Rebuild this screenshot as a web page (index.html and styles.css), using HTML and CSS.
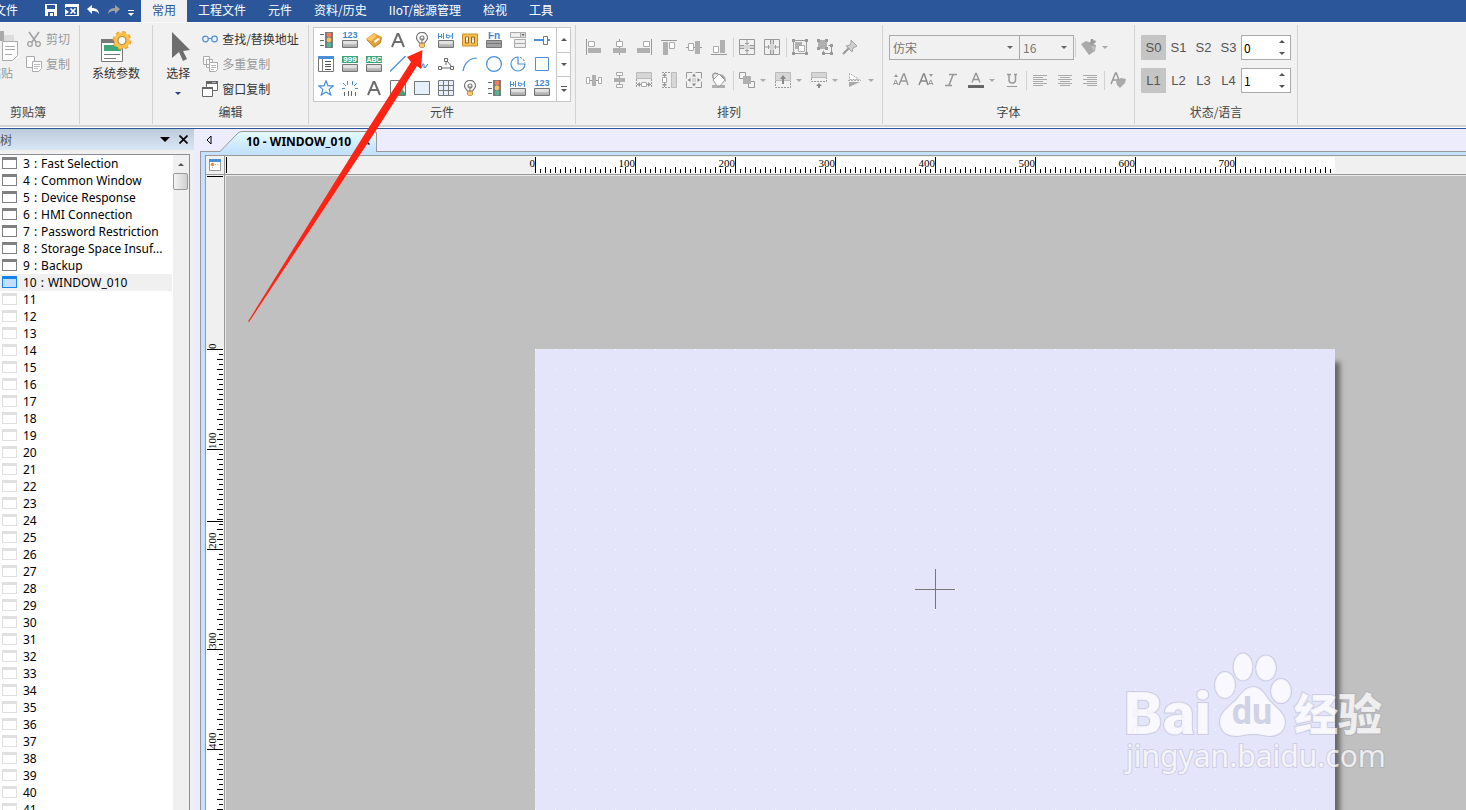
FILE: index.html
```html
<!DOCTYPE html>
<html lang="zh-CN">
<head>
<meta charset="utf-8">
<title>10 - WINDOW_010</title>
<link rel="stylesheet" href="styles.css">
</head>
<body>
<svg class="defs" width="0" height="0" aria-hidden="true">
  <defs>
    <linearGradient id="metal" x1="0" y1="0" x2="0" y2="1"><stop offset="0" stop-color="#e4e4e4"/><stop offset="1" stop-color="#a6a6a6"/></linearGradient>
    <symbol id="i-traffic" viewBox="0 0 16 16"><path d="M2 2.5h4M2 8.5h4M2 13.5h4" stroke="#666"/><rect x="7" y="0" width="8" height="16" fill="#7a7a7a"/><circle cx="11" cy="3" r="2.4" fill="#f47a5c"/><circle cx="11" cy="8" r="2.4" fill="#fbc15e"/><circle cx="11" cy="13" r="2.4" fill="#4cba96"/></symbol>
    <symbol id="i-key" viewBox="0 0 16 16"><path d="M.5 8.5h15v7H.5z" fill="url(#metal)" stroke="#777"/><path d="M2 9h12v3H2z" fill="#e2e2e2"/></symbol>
    <symbol id="i-123" viewBox="0 0 16 16"><text x="8" y="6" class="g-blue">123</text><use href="#i-key" width="16" height="16"/></symbol>
    <symbol id="i-999" viewBox="0 0 16 16"><path d="M0 0h16v7H0z" fill="#3fa679"/><text x="8" y="6" class="g-white">999</text><use href="#i-key" width="16" height="16"/></symbol>
    <symbol id="i-abc" viewBox="0 0 16 16"><path d="M0 0h16v7H0z" fill="#3fa679"/><text x="8" y="6" class="g-white g-abc">ABC</text><use href="#i-key" width="16" height="16"/></symbol>
    <symbol id="i-meter" viewBox="0 0 16 16"><path d="M.5 1v6M3.500 2v4M.5 4.500h4M5.500 1v6M8.500 2v4M10.500 4h4M14.500 1v6" stroke="#4a90d9" fill="none"/><circle cx="10" cy="4.500" r="1.500" stroke="#4a90d9" fill="#fff"/><use href="#i-key" width="16" height="16"/></symbol>
    <symbol id="i-tag" viewBox="0 0 16 16"><path d="M0 7l8-6 8 4-1 6-7 5z" fill="#e2a13d"/><path d="M1 7l7-5 3 2-6 5z" fill="#fbc860"/><path d="M8 9l4-3 2 1-5 4z" fill="#fff"/><path d="M1 8l7 7M15 6l-1 5-6 4" stroke="#c98a30" fill="none"/></symbol>
    <symbol id="i-a" viewBox="0 0 16 16"><path d="M2 15L7.500 2h1L14 15M4.500 10h7" stroke="#6e6e6e" stroke-width="2" fill="none"/></symbol>
    <symbol id="i-bulb" viewBox="0 0 16 16"><path d="M5.500 11C4.500 9 2.500 8.500 2.500 5.800a5.500 5.500 0 0 1 11 0c0 2.700-2 3.200-3 5.200z" fill="#fff" stroke="#777" stroke-width="1.200"/><circle cx="8" cy="6" r="2" fill="none" stroke="#777" stroke-width="1.200"/><path d="M8 6v5" stroke="#777"/><path d="M5.500 11.500h5v3l-1 1h-3l-1-1z" fill="#f8c96a" stroke="#c49a50"/></symbol>
    <symbol id="i-switch" viewBox="0 0 16 16"><path d="M.5 2h15v12H.5z" fill="#fcc04c" stroke="#c98f2e"/><path d="M3.500 5h3v6h-3zM9.500 5h3v6h-3z" fill="#ddd" stroke="#946b22"/><path d="M4 5.500h2v2H4zM10 8.500h2v2h-2z" fill="#fff"/></symbol>
    <symbol id="i-fn" viewBox="0 0 16 16"><text x="8" y="7" class="g-blue g-fn">Fn</text><path d="M.5 8.500h15v7H.5z" fill="#a3a3a3" stroke="#777"/><path d="M1 11.500h14" stroke="#777"/></symbol>
    <symbol id="i-combo" viewBox="0 0 16 16"><path d="M.5.5h15v5H.5zM4.500 7.500h11v4h-11zM4.500 11.500h11v4h-11z" fill="#eee" stroke="#aaa"/><path d="M10.500.5h5v5h-5z" fill="#ddd" stroke="#aaa"/><path d="M11.500 2h3L13 4z" fill="#555"/></symbol>
    <symbol id="i-slider" viewBox="0 0 16 16"><path d="M0 8h9M14 8h2" stroke="#4a90d9" stroke-width="2"/><path d="M9.500 4.500h4v8h-4z" fill="#fff" stroke="#777"/></symbol>
    <symbol id="i-list" viewBox="0 0 16 16"><path d="M.5.5h15v15H.5z" fill="#fff" stroke="#777"/><path d="M0 0h16v3H0z" fill="#4a90d9"/><path d="M4.500 3v12" stroke="#777"/><path d="M7 5.500h6M7 8.500h6M7 10.500h6M7 13.500h6" stroke="#555"/></symbol>
    <symbol id="i-line" viewBox="0 0 16 16"><path d="M0 15.500L15.500 0" stroke="#4a90d9" stroke-width="1.300"/></symbol>
    <symbol id="i-free" viewBox="0 0 16 16"><path d="M1 11c2-8 3-7 4-3s2 5 3 2 2-3 2 0 2 1 4-2" stroke="#4a90d9" fill="none" stroke-width="1.200"/></symbol>
    <symbol id="i-node" viewBox="0 0 16 16"><path d="M8 4v5M9 5l5 6M3 12h9" stroke="#666" fill="none"/><path d="M6.500 2.500h3v3h-3zM.5 10.500h3v3h-3zM12.500 10.500h3v3h-3z" fill="#fff" stroke="#666"/></symbol>
    <symbol id="i-arc" viewBox="0 0 16 16"><path d="M1 15C2 8 7 2 15 2" stroke="#4a90d9" fill="none" stroke-width="1.200"/></symbol>
    <symbol id="i-circle" viewBox="0 0 16 16"><circle cx="8" cy="8" r="7.400" stroke="#4a90d9" fill="#fff" stroke-width="1.200"/></symbol>
    <symbol id="i-pie" viewBox="0 0 16 16"><path d="M8 1a7 7 0 1 0 7 7H8z" stroke="#4a90d9" fill="#fff" stroke-width="1.200"/><path d="M10 1.500A7 7 0 0 1 15 7" stroke="#666" fill="none" stroke-dasharray="2 1.500"/></symbol>
    <symbol id="i-rect" viewBox="0 0 16 16"><path d="M1.500 1.500h13v13h-13z" stroke="#4a90d9" fill="#fff"/></symbol>
    <symbol id="i-star" viewBox="0 0 16 16"><path d="M8 .8l2 5h5.300l-4.100 3.600 1.500 5.600L8 11.900 3.300 15l1.500-5.600L.7 5.800H6z" stroke="#4a90d9" fill="#fff" stroke-width="1.200"/></symbol>
    <symbol id="i-burst" viewBox="0 0 16 16"><path d="M5.500 1v4M10.500 1v4M1 3l3 3M15 3l-3 3M0 8.500h3M13 8.500h3" stroke="#4a90d9" fill="none"/><path d="M2.500 12v4M6.500 11v5M9.500 11v5M13.500 12v4" stroke="#666"/></symbol>
    <symbol id="i-pic" viewBox="0 0 16 16"><path d="M.5.500h15v15H.5z" fill="#fff" stroke="#777"/><path d="M1 15l4-5 3 2 3-5 4 6v2z" fill="#3fa679"/></symbol>
    <symbol id="i-fill" viewBox="0 0 16 16"><path d="M.5 1.500h15v13H.5z" fill="#e4f1fd" stroke="#777"/></symbol>
    <symbol id="i-grid" viewBox="0 0 16 16"><path d="M.5.500h15v15H.5z" fill="#e4f1fd"/><path d="M.5.500h15v15H.5zM5.500 0v16M10.500 0v16M0 5.500h16M0 10.500h16" fill="none" stroke="#777"/></symbol>

    <symbol id="r-left" viewBox="0 0 16 16"><path d="M.5 0v16" stroke="#999"/><path d="M2.500 2.500h6v5h-6z" fill="#fff" stroke="#aaa"/><path d="M2 9h13v5H2z" fill="#b0b0b0"/></symbol>
    <symbol id="r-center" viewBox="0 0 16 16"><path d="M8.500 0v16" stroke="#999"/><path d="M5.500 2.500h6v5h-6z" fill="#fff" stroke="#aaa"/><path d="M2 9h13v5H2z" fill="#b0b0b0"/></symbol>
    <symbol id="r-right" viewBox="0 0 16 16"><path d="M15.500 0v16" stroke="#999"/><path d="M7.500 2.500h6v5h-6z" fill="#fff" stroke="#aaa"/><path d="M1 9h13v5H1z" fill="#b0b0b0"/></symbol>
    <symbol id="r-top" viewBox="0 0 16 16"><path d="M0 1.500h16" stroke="#999"/><path d="M2 3h5v13H2z" fill="#b0b0b0"/><path d="M8.500 3.500h5v6h-5z" fill="#fff" stroke="#aaa"/></symbol>
    <symbol id="r-middle" viewBox="0 0 16 16"><path d="M0 8.500h16" stroke="#999"/><path d="M2.500 4.500h5v7h-5z" fill="#fff" stroke="#aaa"/><path d="M9 2h5v13H9z" fill="#b0b0b0"/></symbol>
    <symbol id="r-bottom" viewBox="0 0 16 16"><path d="M0 15.500h16" stroke="#999"/><path d="M2.500 7.500h5v6h-5z" fill="#fff" stroke="#aaa"/><path d="M9 1h5v13H9z" fill="#b0b0b0"/></symbol>
    <symbol id="r-midv" viewBox="0 0 16 16"><path d="M.5.500h15v15H.5z" fill="none" stroke="#999"/><path d="M1 6h14v4H1z" fill="#d6d6d6"/><path d="M0 6.500h5M11 6.500h5M0 9.500h5M11 9.500h5M8 1v5M6 4.500h4M8 10v5M6 11.500h4" stroke="#999"/></symbol>
    <symbol id="r-midh" viewBox="0 0 16 16"><path d="M.5.500h15v15H.5z" fill="none" stroke="#999"/><path d="M6 1h4v14H6z" fill="#d6d6d6"/><path d="M6.500 0v5M6.500 11v5M9.500 0v5M9.500 11v5M1 8h5M4.500 6v4M10 8h5M11.500 6v4" stroke="#999"/></symbol>
    <symbol id="r-group" viewBox="0 0 16 16"><path d="M2 1.500h12M2 14.500h12M1.500 2v12M14.500 2v12" stroke="#999"/><path d="M0 0h3v3H0zM13 0h3v3h-3zM0 13h3v3H0zM13 13h3v3h-3z" fill="#999"/><path d="M3 3h7v7H3z" fill="#b0b0b0"/><path d="M6.500 6.500h6v6h-6z" fill="#fff" stroke="#aaa"/></symbol>
    <symbol id="r-ungroup" viewBox="0 0 16 16"><path d="M11.500 6.500h3v8h-8v-3" fill="none" stroke="#999"/><path d="M1 1h9v9H1z" fill="#b0b0b0"/><path d="M0 0h3v3H0zM8 0h3v3H8zM0 8h3v3H0zM8 8h3v3H8zM13 5h3v3h-3zM13 13h3v3h-3zM5 13h3v3H5z" fill="#999"/></symbol>
    <symbol id="r-pin" viewBox="0 0 16 16"><path d="M9 1l6 6-2 1-2 1-1 4-6-6 4-1 1-2z" fill="#d0d0d0" stroke="#a4a4a4"/><path d="M7 9l-6 6" stroke="#999" stroke-width="2"/></symbol>
    <symbol id="r-spaceh" viewBox="0 0 16 16"><path d="M0 8.500h16" stroke="#999"/><path d="M.5 5.500h3v6h-3zM12.500 5.500h3v6h-3z" fill="#fff" stroke="#aaa"/><path d="M6 3h4v11H6z" fill="#b0b0b0"/></symbol>
    <symbol id="r-spacev" viewBox="0 0 16 16"><path d="M8.500 0v16" stroke="#999"/><path d="M5.500.500h6v3h-6zM5.500 12.500h6v3h-6z" fill="#fff" stroke="#aaa"/><path d="M3 6h11v4H3z" fill="#b0b0b0"/></symbol>
    <symbol id="r-samew" viewBox="0 0 16 16"><path d="M.5.500h15v6H.5z" fill="#d6d6d6" stroke="#bbb"/><path d="M.5 7v8M15.500 7v8" stroke="#999" stroke-dasharray="2 1"/><path d="M1 12.500h14" stroke="#999"/><path d="M4 10v5l-3-2.500zM12 10v5l3-2.500z" fill="#999"/><path d="M5.500 10.500h5v4h-5z" fill="#fff" stroke="#aaa"/></symbol>
    <symbol id="r-sameh" viewBox="0 0 16 16"><path d="M10.500.5h5v15h-5z" fill="#d6d6d6" stroke="#bbb"/><path d="M1 .5h8M1 15.500h8" stroke="#999" stroke-dasharray="2 1"/><path d="M3.500 1v14" stroke="#999"/><path d="M1 4h5L3.500 1zM1 12h5l-2.500 3z" fill="#999"/><path d="M1.500 5.500h4v5h-4z" fill="#fff" stroke="#aaa"/></symbol>
    <symbol id="r-same" viewBox="0 0 16 16"><path d="M.5.500h15v15H.5z" fill="none" stroke="#999" stroke-dasharray="6 3 12 3 12 3 12 3 6"/><path d="M6 6h4v4H6z" fill="#d6d6d6"/><path d="M8 1.500l2 3H6zM8 14.500l2-3H6zM1.500 8l3-2v4zM14.500 8l-3-2v4z" fill="#888"/></symbol>
    <symbol id="r-paint" viewBox="0 0 16 16"><path d="M1 13h13v3H1z" fill="#b0b0b0"/><path d="M8 2c5 0 7 3 7 8l-3-3" fill="#aaa"/><path d="M2 8l6-6 6 6-5 6H6z" fill="#fff" stroke="#999"/><path d="M3 7C0 3 3 0 7 2" fill="none" stroke="#999" stroke-width="1.400"/></symbol>
    <symbol id="r-order" viewBox="0 0 16 16"><path d="M.5.500h6v6h-6zM9.500 9.500h6v6h-6z" fill="#f4f4f4" stroke="#999"/><path d="M4 4h8v8H4z" fill="#b0b0b0"/></symbol>
    <symbol id="r-up" viewBox="0 0 16 16"><path d="M.5.500h15v8H.5z" fill="#d6d6d6" stroke="#bbb"/><path d="M.5 9v6.500h15V9" fill="none" stroke="#999" stroke-dasharray="2 1"/><path d="M8 12V5" stroke="#888" stroke-width="2"/><path d="M5 7h6L8 3z" fill="#888"/></symbol>
    <symbol id="r-down" viewBox="0 0 16 16"><path d="M.5.500h15v5H.5z" fill="#d6d6d6" stroke="#bbb"/><path d="M.5 6v3.500h15V6" fill="none" stroke="#999" stroke-dasharray="2 1"/><path d="M8 16v-4" stroke="#888" stroke-width="2"/><path d="M5 14h6l-3-3z" fill="#888"/></symbol>
    <symbol id="r-flip" viewBox="0 0 16 16"><path d="M2.500 1.500v6h10z" fill="#fff" stroke="#aaa" stroke-dasharray="2 1"/><path d="M1 8.500h13" stroke="#aaa" stroke-dasharray="2 1"/><path d="M2 10h11L2 15z" fill="#a8a8a8"/></symbol>
    <symbol id="r-brush" viewBox="0 0 16 16"><path d="M0 5l5-3 10 4-1 6-6 4z" fill="#aaa"/><path d="M6 2l3 2 1-4h2l1 2 1-1 1 2-4 3" fill="#999"/><path d="M10 7l4 1-1 4z" fill="#c4c4c4"/></symbol>

    <symbol id="f-grow" viewBox="0 0 16 16"><path d="M6 13L10.500 2h.8L15 13M7.500 9h6" stroke="#999" stroke-width="1.500" fill="none"/><path d="M.5 13L2.500 8h.4L5 13M1 11.500h3" stroke="#999" fill="none"/><path d="M1 5h4L3 2z" fill="#999"/></symbol>
    <symbol id="f-shrink" viewBox="0 0 16 16"><path d="M1 13L5.500 2h.8L10 13M2.500 9h6" stroke="#888" stroke-width="1.500" fill="none"/><path d="M10.500 13l2-5h.4l2.100 5M11 11.500h3" stroke="#999" fill="none"/><path d="M11 2h4l-2 3z" fill="#999"/></symbol>
    <symbol id="f-italic" viewBox="0 0 16 16"><path d="M6 2.500h8M2 13.500h7M10 3L6 13" stroke="#999" stroke-width="1.600"/></symbol>
    <symbol id="f-color" viewBox="0 0 16 16"><path d="M4 10.500L7.700 1.500h.6L12 10.500M5.500 7.500h5" stroke="#999" stroke-width="1.500" fill="none"/><path d="M0 13h16v3H0z" fill="#666"/></symbol>
    <symbol id="f-under" viewBox="0 0 16 16"><path d="M3 2.500h4M10 2.500h3M5 3v5c0 4 6.500 4 6.500 0V3" stroke="#999" stroke-width="1.500" fill="none"/><path d="M3 14.500h10" stroke="#999"/></symbol>
    <symbol id="f-al" viewBox="0 0 16 16"><path d="M1 3.500h14M1 5.500h10M1 7.500h14M1 9.500h10M1 11.500h14M1 13.500h10" stroke="#aaa"/></symbol>
    <symbol id="f-ac" viewBox="0 0 16 16"><path d="M1 3.500h14M3 5.500h10M1 7.500h14M3 9.500h10M1 11.500h14M3 13.500h10" stroke="#aaa"/></symbol>
    <symbol id="f-ar" viewBox="0 0 16 16"><path d="M1 3.500h14M5 5.500h10M1 7.500h14M5 9.500h10M1 11.500h14M5 13.500h10" stroke="#aaa"/></symbol>
    <symbol id="f-clear" viewBox="0 0 16 16"><path d="M1 12L5.500 1h.8L10.500 12M3 8h6" stroke="#999" stroke-width="1.500" fill="none"/><path d="M6 9l5-3 5 1-1 4-5 5-3-3z" fill="#aaa"/></symbol>

    <symbol id="e-cut" viewBox="0 0 16 16"><path d="M3 1l7 10M13 1L6 11" stroke="#a0a0a0" stroke-width="1.600"/><circle cx="4" cy="13" r="2.300" fill="none" stroke="#a0a0a0" stroke-width="1.300"/><circle cx="12" cy="13" r="2.300" fill="none" stroke="#a0a0a0" stroke-width="1.300"/></symbol>
    <symbol id="e-copy" viewBox="0 0 16 16"><path d="M.5.500h8v11h-8z" fill="#fff" stroke="#aaa"/><path d="M6.500 5.500h9v7l-3 3h-6z" fill="#fff" stroke="#aaa"/><path d="M8 8.500h6M8 10.500h6M8 12.500h4" stroke="#bbb"/></symbol>
    <symbol id="e-find" viewBox="0 0 16 16"><circle cx="3.500" cy="8" r="2.800" fill="none" stroke="#4a90d9" stroke-width="1.200"/><circle cx="12.500" cy="8" r="2.800" fill="none" stroke="#4a90d9" stroke-width="1.200"/><path d="M6 7.500h4" stroke="#4a90d9"/></symbol>
    <symbol id="e-multi" viewBox="0 0 16 16"><path d="M1.500.500h6v8h-6zM4.500 3.500h6v8h-6z" fill="#fff" stroke="#aaa"/><path d="M7.500 6.500h8v7l-2 2h-6z" fill="#fff" stroke="#aaa"/><path d="M9 9.500h5M9 11.500h5M9 13.500h3" stroke="#bbb"/></symbol>
    <symbol id="e-win" viewBox="0 0 16 16"><path d="M4.500.500h11v9h-11z" fill="#fff" stroke="#666"/><path d="M4 0h12v3H4z" fill="#666"/><path d="M10.500 1.500h1M12.500 1.500h1" stroke="#fff"/><path d="M.5 6.500h10v9H.5z" fill="#fff" stroke="#666"/><path d="M0 6h11v2H0z" fill="#666"/></symbol>
  </defs>
</svg>

<div class="app">
  <nav class="menubar" aria-label="主菜单">
    <a class="tab file" href="#file">文件</a>
    <div class="quick">
      <button aria-label="保存"><svg width="14" height="14" viewBox="0 0 14 14"><path d="M1 1h12v12H1z" fill="#fff"/><path d="M3 2h8v4H3zM4 9h6v4H4z" fill="#2b579a"/><path d="M6 10h3v3H6z" fill="#fff"/></svg></button>
      <button aria-label="编译"><svg width="14" height="14" viewBox="0 0 14 14"><path d="M0 1h14v3H0zM0 12h14v1H0zM12 1h2v12h-2zM0 4h1v1H0z" fill="#fff"/><path d="M5.500 5.500l5 5m0-5l-5 5" stroke="#fff" stroke-width="1.600"/><path d="M0 6l4 3-4 3z" fill="#fff"/></svg></button>
      <button aria-label="撤销"><svg width="14" height="14" viewBox="0 0 14 14"><path d="M1 6l5-4v3c4 0 7 2 7 6-2-3-4-3-7-3v3z" fill="#fff"/></svg></button>
      <button aria-label="重做"><svg width="14" height="14" viewBox="0 0 14 14"><path d="M13 6L8 2v3c-4 0-7 2-7 6 2-3 4-3 7-3v3z" fill="#a0a0a0"/></svg></button>
      <button class="more" aria-label="更多"><svg width="6" height="14" viewBox="0 0 6 14"><path d="M0 7.500h6" stroke="#fff"/><path d="M0 10h6l-3 3z" fill="#fff"/></svg></button>
    </div>
    <a class="tab active" href="#home">常用</a>
    <a class="tab" href="#project">工程文件</a>
    <a class="tab" href="#objects">元件</a>
    <a class="tab" href="#data">资料/历史</a>
    <a class="tab" href="#iiot">IIoT/能源管理</a>
    <a class="tab" href="#view">检视</a>
    <a class="tab" href="#tools">工具</a>
  </nav>

  <div class="ribbon">
    <section class="group clip">
      <div class="body">
        <button class="big dim"><svg width="34" height="32" viewBox="0 0 34 32"><path d="M2 4h28v6H2z" fill="#aaa"/><path d="M10 0h10v5H10z" fill="#aaa"/><path d="M20 4h10v6H20z" fill="#ddd"/><path d="M18.500 10.500h15v14l-5 5h-10z" fill="#fff" stroke="#aaa"/><path d="M21 15.500h10M21 18.500h10M21 23.500h7" stroke="#aaa"/></svg><span>粘贴</span></button>
        <div class="stack">
          <button class="cmd dim"><svg class="ic"><use href="#e-cut"/></svg>剪切</button>
          <button class="cmd dim"><svg class="ic"><use href="#e-copy"/></svg>复制</button>
        </div>
      </div>
      <h2>剪贴簿</h2>
    </section>
    <section class="group sys">
      <div class="body">
        <button class="big"><svg width="32" height="32" viewBox="0 0 32 32"><path d="M1.500 8.500h21v22h-21z" fill="#fff" stroke="#777"/><path d="M1 8h22v4H1z" fill="#777"/><path d="M4 14h17v6H4z" fill="#3fa679"/><path d="M4 23.500h16M4 27.500h12" stroke="#777"/><circle cx="22" cy="9.500" r="8" fill="none" stroke="#eda834" stroke-width="3" stroke-dasharray="3.500 2.783"/><circle cx="22" cy="9.500" r="8" fill="#fcc04c"/><circle cx="22" cy="9.500" r="4" fill="#fff" stroke="#b58a48" stroke-width="1.200"/></svg><span>系统参数</span></button>
      </div>
    </section>
    <section class="group edit">
      <div class="body">
        <button class="big pick"><svg width="32" height="32" viewBox="0 0 32 32"><path d="M10 1l18 18-7 1 4 8-4 2-4-9-7 6z" fill="#6e6e6e"/></svg><span>选择</span><i class="caret blue"></i></button>
        <div class="stack">
          <button class="cmd"><svg class="ic"><use href="#e-find"/></svg>查找/替换地址</button>
          <button class="cmd dim"><svg class="ic"><use href="#e-multi"/></svg>多重复制</button>
          <button class="cmd"><svg class="ic"><use href="#e-win"/></svg>窗口复制</button>
        </div>
      </div>
      <h2>编辑</h2>
    </section>
    <section class="group objects">
      <div class="gallery">
        <div class="cells" id="gallery"></div>
        <div class="pager">
          <button aria-label="上一行"><i class="caret up"></i></button>
          <button aria-label="下一行"><i class="caret"></i></button>
          <button aria-label="展开"><i class="bar"></i><i class="caret"></i></button>
        </div>
      </div>
      <h2>元件</h2>
    </section>
    <section class="group arrange">
      <div class="tools">
        <div class="line" data-icons="r-left r-center r-right r-top r-middle r-bottom | r-midv r-midh | r-group r-ungroup r-pin"></div>
        <div class="line" data-icons="r-spaceh r-spacev r-samew r-sameh r-same r-paint | r-order+ r-up+ r-down+ r-flip+"></div>
      </div>
      <h2>排列</h2>
    </section>
    <section class="group font">
      <div class="tools">
        <div class="line">
          <span class="pick-box face"><select aria-label="字体"><option>仿宋</option></select></span>
          <span class="pick-box size"><select aria-label="字号"><option>16</option></select></span>
          <span class="line" data-icons="| r-brush+"></span>
        </div>
        <div class="line" data-icons="f-grow f-shrink f-italic f-color+ f-under | f-al f-ac f-ar | f-clear"></div>
      </div>
      <h2>字体</h2>
    </section>
    <section class="group state">
      <div class="tools">
        <div class="line">
          <button class="key on">S0</button><button class="key">S1</button><button class="key">S2</button><button class="key">S3</button>
          <span class="spin"><input type="text" value="0" aria-label="状态"><span class="steps"><button aria-label="加"><i class="caret up"></i></button><button aria-label="减"><i class="caret"></i></button></span></span>
        </div>
        <div class="line">
          <button class="key on">L1</button><button class="key">L2</button><button class="key">L3</button><button class="key">L4</button>
          <span class="spin"><input type="text" value="1" aria-label="语言"><span class="steps"><button aria-label="加"><i class="caret up"></i></button><button aria-label="减"><i class="caret"></i></button></span></span>
        </div>
      </div>
      <h2>状态/语言</h2>
    </section>
  </div>

  <div class="main">
    <aside class="panel">
      <header><span class="title">树</span><button aria-label="菜单"><svg width="10" height="6" viewBox="0 0 10 6"><path d="M0 0h10L5 5z" fill="#000"/></svg></button><button aria-label="关闭"><svg width="9" height="9" viewBox="0 0 9 9"><path d="M.5.500l8 8m0-8l-8 8" stroke="#000" stroke-width="1.600"/></svg></button></header>
      <div class="tree">
        <ul id="windows"></ul>
        <div class="scroll"><button aria-label="向上"><i class="caret up"></i></button><div class="thumb"></div></div>
      </div>
    </aside>
    <section class="editor">
      <div class="tabs">
        <button class="prev" aria-label="上一个"><svg width="6" height="10" viewBox="0 0 6 10"><path d="M5 1v8L1 5z" fill="none" stroke="#000"/></svg></button>
        <div class="doc">
          <svg class="slope" width="22" height="21" viewBox="0 0 22 21"><defs><linearGradient id="tabfill" x1="0" y1="0" x2="0" y2="1"><stop offset="0" stop-color="#e3fbff"/><stop offset="1" stop-color="#c4e1ff"/></linearGradient></defs><path d="M0 21L18 2Q20 .5 22 .5V21z" fill="url(#tabfill)"/><path d="M0 20.500L18 2Q20 .5 22 .5" fill="none" stroke="#999"/></svg>
          <div class="doc-body"><span>10 - WINDOW_010</span><button aria-label="关闭标签"><svg width="7" height="7" viewBox="0 0 7 7"><path d="M.5.500l6 6m0-6l-6 6" stroke="#000" stroke-width="1.400"/></svg></button></div>
        </div>
      </div>
      <div class="frame">
        <div class="sheet">
          <div class="corner"><svg width="12" height="12" viewBox="0 0 12 12"><path d="M.5.500h11v11H.5z" fill="#fff" stroke="#999"/><path d="M0 0h12v3H0z" fill="#4a90d9"/><circle cx="3.500" cy="5.500" r="1.800" fill="#f08a3c"/><path d="M6 5.500h4M3.500 8v2" stroke="#bbb" stroke-dasharray="1 1"/></svg></div>
          <svg class="ruler-h" id="ruler-h"><defs><pattern id="th" x="310" width="10" height="18" patternUnits="userSpaceOnUse"><path d="M.5 11v6M5.500 13v4" stroke="#000"/></pattern></defs><rect x="310" y="1" width="800" height="16" fill="#fff"/><path d="M1.500 1v16" stroke="#000"/><rect x="311" y="0" width="799" height="18" fill="url(#th)"/></svg>
          <svg class="ruler-v" id="ruler-v"><defs><pattern id="tv" y="174" width="18" height="10" patternUnits="userSpaceOnUse"><path d="M11 .5h6M13 5.500h4" stroke="#000"/></pattern></defs><rect x="0" y="174" width="17" height="480" fill="#fff"/><path d="M1 1.500h16M1 346.500h16" stroke="#000"/><rect x="0" y="175" width="18" height="479" fill="url(#tv)"/></svg>
          <div class="workspace">
            <div class="page"><svg width="40" height="40" viewBox="0 0 40 40"><path d="M20.500 0v40M0 20.500h40" stroke="#777"/></svg></div>
          </div>
        </div>
      </div>
    </section>
  </div>

  <svg class="watermark" width="280" height="140" viewBox="0 0 280 140">
    <g class="mark">
      <text x="12" y="94" class="w-bai">Bai</text>
      <ellipse cx="113" cy="45" rx="10" ry="13"/><ellipse cx="131" cy="27" rx="9.500" ry="13.500"/><ellipse cx="154" cy="28" rx="10" ry="12.500"/><ellipse cx="169" cy="51" rx="10" ry="12"/>
      <path d="M141 47c7 0 11 6 15 12s17 13 17 23c0 9-7 14-15 14-6 0-10-2-17-2s-11 2-17 2c-9 0-16-5-16-14 0-11 12-17 17-23s9-12 16-12z"/>
      <text x="182" y="91" class="w-cn">经验</text>
      <text x="14" y="127" class="w-url">jingyan.baidu.com</text>
    </g>
    <text x="140" y="84" class="w-du">du</text>
  </svg>
  <svg class="pointer" width="180" height="280" viewBox="0 0 180 280"><path d="M174.500 6L159 13l4 5L118 88 0 277.500l1 .5L127 88l42-66 4 3z" fill="#ff2313"/></svg>
</div>
<script src="app.js"></script>
</body>
</html>
```
FILE: app.js
```js
const NS = 'http://www.w3.org/2000/svg';
const icon = id => `<svg class="ic"><use href="#${id}"/></svg>`;

document.getElementById('gallery').innerHTML = (
  'traffic 123 tag a bulb meter switch fn combo slider ' +
  'list 999 abc line free node arc circle pie rect ' +
  'star burst a pic fill grid bulb traffic meter 123'
).split(' ').map(n => `<button aria-label="${n}">${icon('i-' + n)}</button>`).join('');

document.querySelectorAll('[data-icons]').forEach(row => {
  row.innerHTML = row.dataset.icons.split(' ').map(n => {
    if (n === '|') return '<i class="sep"></i>';
    const split = n.endsWith('+');
    const id = n.replace('+', '');
    return `<button class="tool" aria-label="${id}">${icon(id)}${split ? '<i class="caret pale"></i>' : ''}</button>`;
  }).join('');
});

const named = {
  3: 'Fast Selection', 4: 'Common Window', 5: 'Device Response', 6: 'HMI Connection',
  7: 'Password Restriction', 8: 'Storage Space Insuf...', 9: 'Backup', 10: 'WINDOW_010'
};
let rows = '';
for (let i = 3; i <= 42; i++) {
  const kind = i === 10 ? 'current' : named[i] ? 'used' : 'empty';
  const name = named[i] ? `<span>:</span><span>${named[i]}</span>` : '';
  rows += `<li class="${kind}"><i class="win"></i><span>${i}</span>${name}</li>`;
}
document.getElementById('windows').innerHTML = rows;

const add = (parent, tag, attrs, text) => {
  const el = document.createElementNS(NS, tag);
  for (const k in attrs) el.setAttribute(k, attrs[k]);
  if (text !== undefined) el.textContent = text;
  parent.appendChild(el);
};
const h = document.getElementById('ruler-h');
const v = document.getElementById('ruler-v');
for (let n = 0; n <= 700; n += 100) {
  const x = 310 + n;
  add(h, 'path', { d: `M${x}.5 1v16`, stroke: '#000' });
  add(h, 'text', { x: x, y: 11, 'text-anchor': 'end' }, n);
}
for (let n = 0; n <= 400; n += 100) {
  const y = 174 + n;
  add(v, 'path', { d: `M1 ${y}.5h16`, stroke: '#000' });
  add(v, 'text', { x: 0, y: 0, transform: `translate(10 ${y}) rotate(-90)` }, n);
}
```
FILE: styles.css
```css
* { box-sizing: border-box; }
body { margin: 0; font: 12px/16px "Noto Sans CJK SC", sans-serif; color: #333; }
button, input, select { font: inherit; color: inherit; background: none; border: 0; padding: 0; margin: 0; border-radius: 0; }
button { display: flex; align-items: center; justify-content: center; }
svg { display: block; }
.defs { position: absolute; }
.ic { width: 16px; height: 16px; flex: none; }
.app { position: relative; height: 100vh; overflow: hidden; display: flex; flex-direction: column; }

.menubar { display: flex; height: 22px; background: #2b579a; flex: none; }
.tab { display: flex; align-items: center; padding: 0 11px 2px; color: #fff; text-decoration: none; white-space: nowrap; }
.tab.file { margin-left: -17px; }
.tab.active { background: #f1f1f1; color: #2b579a; }
.quick { display: flex; align-items: center; gap: 7px; padding: 0 8px 2px 15px; }
.quick .more { width: 6px; margin-right: -1px; }

.ribbon { display: flex; flex: none; height: 107px; padding-top: 2px; background: #f1f1f1; border-top: 1px solid #fafafa; border-bottom: 1px solid #2b579a; box-shadow: inset 0 -1px #fff, inset 0 -3px #d4d4d4; }
.group { display: flex; flex-direction: column; align-items: center; height: 99px; border-right: 1px solid #d2d2d2; }
.group h2 { margin: auto 0 4px; font-size: 12px; font-weight: 400; line-height: 16px; color: #444; }
.body { display: flex; }
.big { display: flex; flex-direction: column; align-items: center; justify-content: flex-start; padding-top: 6px; }
.big span { margin-top: 2px; }
.dim { color: #999; }
.stack { display: flex; flex-direction: column; gap: 1px; padding-top: 2px; }
.cmd { height: 24px; gap: 4px; justify-content: flex-start; white-space: nowrap; }
.clip { width: 103px; margin-left: -23px; flex: none; }
.clip .body { gap: 8px; align-self: flex-start; padding-left: 7px; }
.sys { width: 73px; }
.edit { width: 156px; }
.edit .body { gap: 8px; }
.pick { width: 32px; }
.caret { width: 0; height: 0; border: 3px solid transparent; border-top-color: #555; border-bottom: 0; }
.caret.up { border-top: 0; border-bottom: 3px solid #555; }
.caret.blue { border-top-color: #2b3f7a; margin-top: 11px; }
.caret.pale { border-top-color: #aaa; }

.objects { width: 267px; }
.gallery { display: flex; margin-top: 2px; height: 75px; background: #fff; border: 1px solid #c8c8c8; }
.cells { display: grid; grid-template-columns: repeat(10, 24px); grid-auto-rows: 24px; padding: 0 2px 0 0; }
.pager { display: flex; flex-direction: column; width: 14px; border-left: 1px solid #c8c8c8; }
.pager button { flex: 1; flex-direction: column; gap: 2px; }
.pager button + button { border-top: 1px solid #c8c8c8; }
.bar { width: 6px; height: 1px; background: #555; }
.g-blue, .g-white { font: bold 9px "Liberation Sans", sans-serif; text-anchor: middle; fill: #3d86d6; }
.g-white { font-size: 8px; fill: #fff; }
.g-white.g-abc { font-size: 7px; }
.g-blue.g-fn { font-size: 10px; }

.tools { display: flex; flex-direction: column; gap: 8px; padding-top: 10px; }
.line { display: flex; align-items: center; height: 25px; }
.tool { width: 25px; height: 25px; padding: 0 1px 1px 0; }
.tool:has(.caret) { width: 36px; gap: 5px; }
.sep { width: 1px; height: 19px; margin: 0 1px; background: #d2d2d2; }
.arrange { width: 307px; }
.arrange .tools { align-self: flex-start; padding-left: 6px; }
.font { width: 252px; }
.font .tools { align-self: flex-start; padding-left: 6px; }
.pick-box { position: relative; height: 25px; border: 1px solid #aaa; color: #777; }
.pick-box::after { content: ""; position: absolute; right: 6px; top: 10px; border: 3px solid transparent; border-top-color: #666; border-bottom: 0; }
.pick-box select { appearance: none; width: 100%; height: 100%; padding-left: 3px; }
.face { width: 131px; }
.size { width: 55px; margin-left: -1px; }
.state { width: 163px; }
.key { width: 25px; height: 25px; font-family: "Liberation Sans", sans-serif; font-size: 13px; color: #555; }
.key.on { background: #c5c5c5; }
.spin { display: flex; width: 50px; height: 25px; background: #fff; border: 1px solid #aaa; }
.spin input { width: 32px; padding-left: 2px; color: #000; }
.steps { display: flex; flex-direction: column; width: 16px; }
.steps button { flex: 1; }

.main { display: flex; flex: 1; min-height: 0; background: #ececfc; }
.panel { display: flex; flex-direction: column; width: 194px; background: #f0f0f0; flex: none; }
.panel header { display: flex; align-items: center; gap: 9px; height: 21px; padding-right: 6px; background: linear-gradient(#bccbdb, #d9e6f4); color: #555; }
.panel .title { margin-right: auto; }
.tree { display: flex; flex: 1; min-height: 0; margin: 4px 4px 0 0; border: 1px solid #8a8d94; border-width: 1px 1px 0 0; background: #fff; overflow: hidden; }
.tree ul { flex: 1; margin: 0; padding: 0; list-style: none; font-family: "Noto Sans", sans-serif; font-size: 12px; color: #000; white-space: nowrap; }
.tree li { display: flex; align-items: center; gap: 4px; height: 17px; padding-left: 2px; }
.win { width: 15px; height: 12px; margin: 0 2px 1px 0; border: 1px solid #808080; border-top-width: 3px; }
.empty .win { border-color: #e0e0e0; }
.current { background: #f0f0f0; }
.current .win { border-color: #1684e8; background: #c2dfff; }
.scroll { display: flex; flex-direction: column; width: 17px; background: #f0f0f0; padding: 0 1px 0 0; border-left: 1px solid #fff; }
.scroll button { height: 18px; }
.thumb { height: 17px; border: 1px solid #999; border-radius: 2px; background: linear-gradient(90deg, #f4f4f4, #cfcfcf); }

.editor { display: flex; flex: 1; flex-direction: column; min-width: 0; margin-left: 6px; }
.tabs { display: flex; align-items: flex-end; height: 23px; border-bottom: 1px solid #999; flex: none; }
.prev { width: 20px; height: 23px; padding-right: 3px; }
.doc { display: flex; height: 21px; margin-bottom: -1px; }
.doc-body { display: flex; align-items: center; gap: 12px; padding: 0 6px 1px 4px; background: linear-gradient(#e3fbff, #c4e1ff); border: 1px solid #999; border-width: 1px 1px 0 0; border-top-right-radius: 3px; font: bold 12px/16px "Noto Sans", sans-serif; color: #000; white-space: nowrap; }
.frame { flex: 1; min-height: 0; display: flex; padding: 3px 0 0 4px; background: #c4e1ff; border-left: 1px solid #999; }
.sheet { flex: 1; min-width: 0; display: grid; grid-template: 19px 1fr / 19px 1fr; border: 1px solid #999; border-width: 1px 0 0 1px; background: #f0f0f0; }
.corner { display: flex; align-items: center; justify-content: center; border-right: 1px solid #999; border-bottom: 1px solid #999; }
.ruler-h, .ruler-v { font: 11px "Liberation Serif", serif; fill: #000; }
.ruler-h { width: 100%; height: 19px; border-bottom: 1px solid #999; }
.ruler-v { width: 19px; height: 100%; border-right: 1px solid #999; }
.workspace { position: relative; overflow: hidden; background: #c0c0c0; border: 1px solid #e8e8e8; border-width: 1px 0 0 1px; }
.page { position: absolute; left: 309px; top: 173px; width: 800px; height: 480px; display: flex; align-items: center; justify-content: center; background: #e4e4fa radial-gradient(circle at 0 0, #fff 1px, transparent 1px) 0 0 / 20px 20px; box-shadow: 6px 12px 5px -1px #666; }

.watermark { position: absolute; right: 74px; bottom: 30px; pointer-events: none; }
.mark { fill: #fff; fill-opacity: .75; stroke: #8888a0; stroke-opacity: .25; stroke-width: 2px; paint-order: stroke; }
.w-bai { font: 900 60px Roboto, sans-serif; }
.w-du { font: bold 36px Roboto, sans-serif; fill: #d2d2e6; text-anchor: middle; }
.w-cn { font: 900 44px "Noto Sans CJK SC", sans-serif; }
.w-url { font: 30px "Noto Sans", sans-serif; }
.pointer { position: absolute; left: 248px; top: 44px; pointer-events: none; }
```
